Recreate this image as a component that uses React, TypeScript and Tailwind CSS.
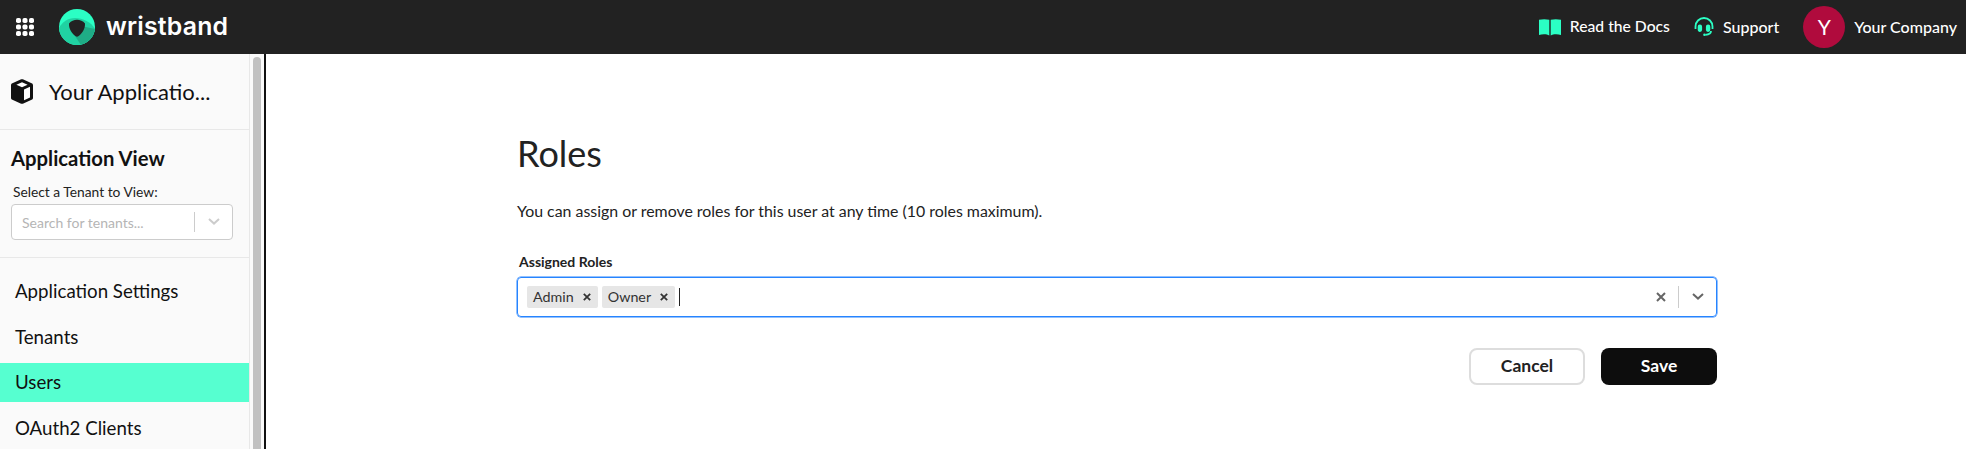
import React from "react";

function Grid() {
  const pts = [0, 1, 2];
  return (
    <svg width="18" height="18" viewBox="0 0 18 18" fill="#fff">
      {pts.map((r) => pts.map((c) => <rect key={`${r}${c}`} x={c * 6.5} y={r * 6.5} width="5" height="5" rx="1.8" />))}
    </svg>
  );
}

function Logo() {
  return (
    <svg width="36" height="36" viewBox="0 0 36 36">
      <defs>
        <clipPath id="c"><circle cx="18" cy="18" r="18" /></clipPath>
      </defs>
      <g clipPath="url(#c)">
        <rect width="36" height="36" fill="#2bffc4" />
        <path d="M0 19C3 13 9 9 16 9C24 9 32 13 36 20V36H0Z" fill="#20d2a2" />
        <path d="M22 17L36 20V26L30 36H22L16 27Z" fill="#1fac86" />
      </g>
      <path d="M10 14.5C12 12 15 10.8 18 10.8C21 10.8 24 12 26 14.5C26.3 20 23 24.6 19.3 27.2C18.5 27.8 17.5 27.8 16.7 27.2C13 24.6 9.7 20 10 14.5Z" fill="#222222" />
    </svg>
  );
}

function Cube() {
  return (
    <svg width="22" height="25" viewBox="0 0 22 25">
      <path d="M9.6.6C10.5.2 11.5.2 12.4.6L20.6 4.2C21.5 4.6 22 5.4 22 6.3V18.7C22 19.6 21.5 20.4 20.6 20.8L12.4 24.4C11.5 24.8 10.5 24.8 9.6 24.4L1.4 20.8C.5 20.4 0 19.6 0 18.7V6.3C0 5.4.5 4.6 1.4 4.2Z" fill="#111" />
      <path d="M11 3.2L16.6 5.8L11 8.2L5.4 5.8Z" fill="#fff" />
      <path d="M13 10.4L19 7.8V18.4L13 21.2Z" fill="#fff" />
    </svg>
  );
}

function Book() {
  return (
    <svg width="22" height="17" viewBox="0 0 22 17" fill="#2bffc4">
      <path d="M0 .8C3.5 0 7 0 10.3 .8V16.6C9 15.7 7 15.2 5 15.2C3.2 15.2 1.5 15.5 0 16Z" />
      <path d="M11.7 .8C15 0 18.5 0 22 .8V16C20.5 15.5 18.8 15.2 17 15.2C15 15.2 13 15.7 11.7 16.6Z" />
    </svg>
  );
}

function Headset() {
  return (
    <svg width="20" height="20" viewBox="0 0 20 20" fill="none" stroke="#2bffc4" strokeWidth="1.8">
      <path d="M1.5 12V9.5a8.5 8.5 0 0 1 17 0V12" />
      <rect x="4.6" y="8.5" width="2.6" height="5.5" rx="1.2" fill="#2bffc4" />
      <rect x="12.8" y="8.5" width="2.6" height="5.5" rx="1.2" fill="#2bffc4" />
      <path d="M17 14c0 2.3-2 3.6-5.5 3.8" />
      <circle cx="10.5" cy="17.8" r="1.3" fill="#2bffc4" stroke="none" />
    </svg>
  );
}

function X({ size = 10, color = "#333", sw = 2 }: { size?: number; color?: string; sw?: number }) {
  return (
    <svg width={size} height={size} viewBox="0 0 10 10" fill="none" stroke={color} strokeWidth={sw}>
      <path d="M1 1l8 8M9 1L1 9" />
    </svg>
  );
}

function Chev({ color, w = 12 }: { color: string; w?: number }) {
  return (
    <svg width={w} height={w * 0.6} viewBox="0 0 12 7" fill="none" stroke={color} strokeWidth="2">
      <path d="M1 1l5 4.5L11 1" />
    </svg>
  );
}

function Tag({ label }: { label: string }) {
  return (
    <div className="flex items-center h-[22px] bg-[#e6e6e6] rounded-[2px] pl-[6px] pr-[7px] gap-[9px]">
      <span className="text-[14.3px] text-[#333]">{label}</span>
      <X size={8} sw={2.2} />
    </div>
  );
}

export default function App() {
  return (
    <div className="w-[1966px] h-[449px] overflow-hidden flex flex-col bg-white font-['Lato','Liberation_Sans',sans-serif] text-[#1a1a1a]">
      <header className="h-[54px] shrink-0 bg-[#222222] flex items-center text-white">
        <div className="ml-[16px]"><Grid /></div>
        <div className="ml-[25px]"><Logo /></div>
        <span className="ml-[11px] font-['Inter',sans-serif] font-semibold text-[24.8px] tracking-[0.2px] text-white">wristband</span>
        <div className="ml-auto flex items-center">
          <Book />
          <span className="ml-[9px] text-[15.7px] font-medium">Read the Docs</span>
          <div className="ml-[24px]"><Headset /></div>
          <span className="ml-[9px] text-[16px] font-medium">Support</span>
          <div className="ml-[24px] w-[42px] h-[42px] rounded-full bg-[#b00b3d] flex items-center justify-center text-[21px]">Y</div>
          <span className="ml-[9px] mr-[9px] text-[16px] font-medium">Your Company</span>
        </div>
      </header>
      <div className="flex flex-1 min-h-0">
        <aside className="w-[250px] shrink-0 bg-[#fafafa] border-r border-[#e8e8e8] flex flex-col">
          <div className="h-[76px] shrink-0 border-b border-[#e8e8e8] flex items-center pl-[11px]">
            <Cube />
            <span className="ml-[16px] text-[22px] text-[#111]">Your Applicatio...</span>
          </div>
          <div className="h-[128px] shrink-0 border-b border-[#e8e8e8] px-[11px] pt-[15px]">
            <div className="text-[20.3px] font-bold leading-[26px] text-[#111]">Application View</div>
            <div className="mt-[13px] ml-[2px] text-[13.8px] leading-[16px] text-[#222]">Select a Tenant to View:</div>
            <div className="mt-[4px] h-[36px] w-[222px] rounded-[4px] bg-white border border-[#cccccc] flex items-center pl-[10px]">
              <span className="text-[14px] text-[#b5b5b5]">Search for tenants...</span>
              <div className="ml-auto w-px h-[20px] bg-[#cccccc]"></div>
              <div className="w-[37px] flex justify-center"><Chev color="#cccccc" /></div>
            </div>
          </div>
          <nav className="pt-[14px] flex flex-col gap-[6.5px] text-[18.7px] text-[#111]">
            <div className="h-[39px] flex items-center pl-[15px]">Application Settings</div>
            <div className="h-[39px] flex items-center pl-[15px]">Tenants</div>
            <div className="h-[39px] flex items-center pl-[15px] bg-[#56ffd0]">Users</div>
            <div className="h-[39px] flex items-center pl-[15px]">OAuth2 Clients</div>
          </nav>
        </aside>
        <div className="w-[14px] shrink-0 bg-[#fafafa] pt-[3px] pl-[3px]">
          <div className="w-[8px] h-full rounded-t-[4px] bg-[#c1c1c1]"></div>
        </div>
        <div className="w-[2px] shrink-0 bg-[#111]"></div>
        <main className="flex-1 min-w-0 pl-[2px]">
          <div className="w-[1200px] mx-auto pt-[74px]">
            <h1 className="text-[36px] leading-[50px] text-[#222]">Roles</h1>
            <p className="mt-[22px] text-[15.9px] leading-[22px] text-[#222]">You can assign or remove roles for this user at any time (10 roles maximum).</p>
            <div className="mt-[30px] ml-[2px] text-[14px] font-bold leading-[20px] text-[#222]">Assigned Roles</div>
            <div className="mt-[5px] h-[40px] rounded-[4px] border border-[#2684ff] shadow-[0_0_0_0.5px_#2684ff] flex items-center pl-[9px]">
              <Tag label="Admin" />
              <div className="ml-[4px]"><Tag label="Owner" /></div>
              <div className="ml-[4px] w-px h-[18px] bg-[#222]"></div>
              <div className="ml-auto"><X size={10} color="#666" sw={2} /></div>
              <div className="ml-[12px] w-px h-[22px] bg-[#cccccc]"></div>
              <div className="w-[37px] flex justify-center"><Chev color="#666" /></div>
            </div>
            <div className="mt-[31px] flex justify-end gap-[16px]">
              <button className="w-[116px] h-[37px] rounded-[8px] border-2 border-[#dddddd] bg-white text-[17.5px] font-bold text-[#222]">Cancel</button>
              <button className="w-[116px] h-[37px] rounded-[8px] bg-[#0d0d0d] text-[17.5px] font-bold text-white">Save</button>
            </div>
          </div>
        </main>
      </div>
    </div>
  );
}
